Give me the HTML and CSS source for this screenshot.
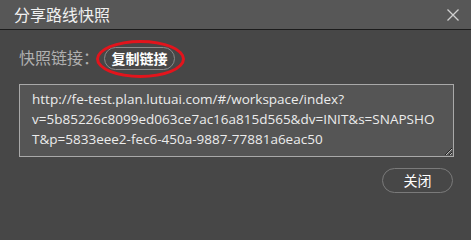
FILE: index.html
```html
<!DOCTYPE html>
<html lang="zh">
<head>
<meta charset="utf-8">
<title>分享路线快照</title>
<link rel="stylesheet" href="styles.css">
</head>
<body>
<div class="dialog">
  <div class="header">
    <span class="title">分享路线快照</span>
    <span class="close" aria-label="关闭">
      <svg width="12" height="12" viewBox="0 0 12 12"><path d="M0.5 0.5 L11.5 11.5 M11.5 0.5 L0.5 11.5" stroke="#cfcfcf" stroke-width="1.3" fill="none"/></svg>
    </span>
  </div>
  <div class="content">
    <div class="row">
      <span class="label">快照链接：</span>
      <span class="copy-wrap">
        <button class="copy">复制链接</button>
        <span class="ring"></span>
      </span>
    </div>
    <textarea class="link" wrap="off" spellcheck="false">http://fe-test.plan.lutuai.com/#/workspace/index?
v=5b85226c8099ed063ce7ac16a815d565&amp;dv=INIT&amp;s=SNAPSHO
T&amp;p=5833eee2-fec6-450a-9887-77881a6eac50</textarea>
    <div class="footer">
      <button class="btn-close">关闭</button>
    </div>
  </div>
</div>
</body>
</html>
```
FILE: styles.css
```css
html, body {
  margin: 0;
  padding: 0;
  background: #474747;
}
body {
  width: 471px;
  height: 201px;
  overflow: hidden;
  font-family: "Noto Sans", "Noto Sans CJK SC", sans-serif;
}
.dialog {
  width: 471px;
  height: 201px;
  display: flex;
  flex-direction: column;
}
.header {
  height: 29px;
  border-bottom: 1px solid #1c1c1c;
  background: #575757;
  display: flex;
  align-items: center;
  justify-content: space-between;
  padding: 0 12px 0 14px;
}
.title {
  font-family: "Noto Sans CJK SC", sans-serif;
  font-size: 16px;
  color: #f0f0f0;
  line-height: 29px;
}
.close {
  display: flex;
  width: 12px;
  height: 12px;
  margin-top: 1px;
}
.content {
  padding: 17px 17px 0 19px;
  display: flex;
  flex-direction: column;
}
.row {
  display: flex;
  align-items: center;
  height: 23px;
  gap: 5px;
}
.label {
  font-family: "Noto Sans CJK SC", sans-serif;
  font-size: 16px;
  color: #b0b0b0;
  line-height: 23px;
  margin-top: -2px;
}
.copy-wrap {
  position: relative;
  display: flex;
}
.copy {
  width: 71px;
  height: 23px;
  padding: 0;
  border: 1px solid #8a8a8a;
  border-radius: 12px;
  background: transparent;
  color: #ffffff;
  font-family: "Noto Sans CJK SC", sans-serif;
  font-size: 14px;
  font-weight: bold;
  line-height: 21px;
}
.ring {
  position: absolute;
  left: -8px;
  top: -7px;
  width: 89px;
  height: 38px;
  box-sizing: border-box;
  border: 3px solid #e3141c;
  border-radius: 50%;
  pointer-events: none;
}
.link {
  margin-top: 14px;
  width: 435px;
  height: 73px;
  box-sizing: border-box;
  border: 1px solid #a9a9a9;
  background: #555555;
  color: #ececec;
  font-family: "Open Sans", sans-serif;
  font-size: 13.5px;
  line-height: 20px;
  padding: 4px 8px 0 12px;
  white-space: pre;
  overflow: hidden;
  resize: both;
  outline: none;
  border-radius: 0;
}
.footer {
  display: flex;
  justify-content: flex-end;
  margin-top: 11px;
  padding-right: 1px;
}
.btn-close {
  width: 71px;
  height: 25px;
  padding: 0;
  border: 1px solid #7a7a7a;
  border-radius: 13px;
  background: transparent;
  color: #ffffff;
  font-family: "Noto Sans CJK SC", sans-serif;
  font-size: 14px;
  line-height: 23px;
}
```
